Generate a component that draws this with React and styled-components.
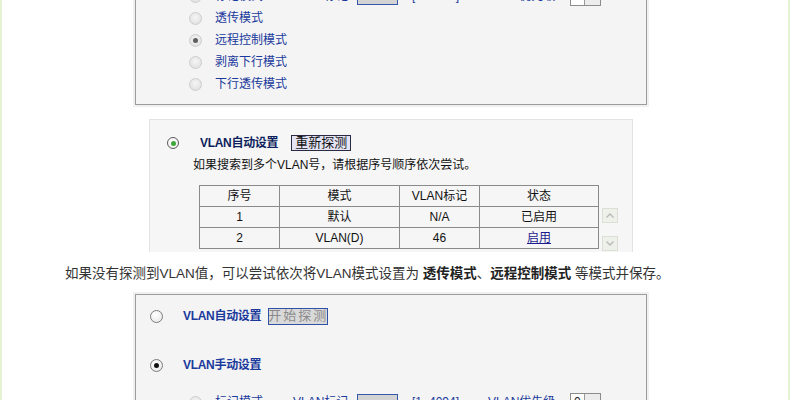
import React from "react";
import styled, { createGlobalStyle, css } from "styled-components";

const GlobalStyle = createGlobalStyle`
  html, body { margin: 0; padding: 0; background: #fff; }
  body {
    font-family: "Liberation Sans", "Noto Sans CJK SC", sans-serif;
    overflow: hidden;
  }
`;

const Page = styled.div`
  box-sizing: border-box;
  width: 790px;
  height: 400px;
  overflow: hidden;
  background: #fff;
  border-left: 2px solid #e6f2d4;
  border-right: 2px solid #e6f2d4;
  display: flex;
  flex-direction: column;
  align-items: flex-start;
`;

/* grey settings frame of the router page */
const Panel = styled.section`
  box-sizing: border-box;
  flex: none;
  width: 512px;
  margin: ${(p) => p.$top}px 0 0 133px;
  padding: ${(p) => p.$pad};
  background: #f4f4f4;
  border: 1px solid #9c9c9c;
  box-shadow: 0 0 0 2px #f0f0f0;
`;

const Row = styled.div`
  display: flex;
  align-items: center;
  height: ${(p) => p.$h ?? 22}px;
  margin-top: ${(p) => p.$mt ?? 0}px;
  padding-left: ${(p) => p.$indent ?? 0}px;
  gap: ${(p) => p.$gap ?? 13}px;
  font-size: 12px;
  line-height: 22px;
  color: #1a3a9c;
  white-space: nowrap;
`;

const radioLooks = {
  muted: css`
    border: 1px solid #cdcdcd;
    background: radial-gradient(circle at 50% 40%, #f5f5f5, #dcdcdc);
  `,
  plain: css`
    border: 1px solid #7c7c7c;
    background: radial-gradient(circle at 40% 35%, #ffffff, #e4e4e4);
  `,
  xp: css`
    border: 1px solid #5a5a5a;
    background: radial-gradient(circle at 40% 35%, #ffffff, #ececec);
  `,
};

const dotColors = { muted: "#5e5e5e", plain: "#111", xp: "#3fa63a" };

const Radio = styled.span`
  flex: none;
  box-sizing: border-box;
  position: relative;
  width: ${(p) => p.$size ?? 13}px;
  height: ${(p) => p.$size ?? 13}px;
  border-radius: 50%;
  ${(p) => radioLooks[p.$look || "muted"]}
  &::after {
    content: "";
    display: ${(p) => (p.$on ? "block" : "none")};
    position: absolute;
    left: 50%;
    top: 50%;
    width: 5px;
    height: 5px;
    margin: -2.5px 0 0 -2.5px;
    border-radius: 50%;
    background: ${(p) => dotColors[p.$look || "muted"]};
  }
`;

const Field = styled.span`
  flex: none;
  width: ${(p) => p.$w}px;
`;

const TagInput = styled.span`
  flex: none;
  box-sizing: border-box;
  width: 41px;
  height: 17px;
  background: #d3d3d3;
  border: 1px solid #3658a8;
`;

const Select = styled.span`
  flex: none;
  box-sizing: border-box;
  display: flex;
  width: 31px;
  height: 19px;
  border: 1px solid #8c8c8c;
  background: #fff;
  font-size: 12px;
  line-height: 17px;
  color: #222;
`;

const SelectValue = styled.span`
  flex: 1;
  padding-left: 3px;
`;

const SelectArrow = styled.span`
  flex: none;
  box-sizing: border-box;
  width: 16px;
  border-left: 1px solid #9a9a9a;
  background: #ececec;
  display: flex;
  align-items: center;
  justify-content: center;
`;

const Title = styled.span`
  font-weight: bold;
  font-size: 12px;
  letter-spacing: -0.3px;
  color: ${(p) => p.$color || "#1a3a9c"};
`;

const ProbeButton = styled.span`
  flex: none;
  box-sizing: border-box;
  width: 60px;
  height: ${(p) => (p.$off ? 17 : 16)}px;
  margin-left: ${(p) => p.$ml}px;
  display: flex;
  align-items: center;
  justify-content: center;
  font-size: 13px;
  letter-spacing: ${(p) => (p.$off ? 2 : 0)}px;
  ${(p) =>
    p.$off
      ? css`
          background: #d9d9d9;
          border: 1px solid #2f52a8;
          color: #8a8a8a;
        `
      : css`
          background: #e3e3f4;
          border: 1px solid #2a2a44;
          color: #111;
        `}
`;

/* captured image of the old firmware page */
const Snapshot = styled.div`
  box-sizing: border-box;
  flex: none;
  width: 484px;
  height: 133px;
  margin: 14px 0 0 147px;
  padding: 14px 0 0 17px;
  overflow: hidden;
  background: #f6f6f6;
  border: 1px solid #e3e3e3;
  border-bottom: none;
  font-size: 12px;
  color: #111;
`;

const Hint = styled.div`
  margin: 5px 0 0 26px;
  height: 16px;
  line-height: 16px;
  font-size: 12px;
  color: #111;
  white-space: nowrap;
`;

const TableWrap = styled.div`
  display: flex;
  align-items: flex-start;
  margin: 12px 0 0 32px;
`;

const Grid = styled.table`
  border-collapse: collapse;
  table-layout: fixed;
  width: 400px;
  font-size: 12px;
  color: #111;
`;

const Cell = styled.td`
  height: 20px;
  padding: 0;
  border: 1px solid #8a8a8a;
  text-align: center;
  line-height: 20px;
  white-space: nowrap;
`;

const Link = styled.span`
  color: #1a1a8c;
  text-decoration: underline;
`;

const ScrollBar = styled.div`
  display: flex;
  flex-direction: column;
  gap: 13px;
  margin: 23px 0 0 3px;
`;

const ScrollButton = styled.span`
  box-sizing: border-box;
  width: 16px;
  height: 15px;
  background: #eef0ea;
  border: 1px solid #dcdfd6;
  display: flex;
  align-items: center;
  justify-content: center;
`;

const Note = styled.p`
  margin: 12px 0 0 63px;
  font-size: 13.5px;
  line-height: 20px;
  color: #333;
  white-space: nowrap;
`;

const Strong = styled.b`
  color: #222;
`;

const Chevron = ({ up, color = "#b8b8b8" }) => (
  <svg width="8" height="5" viewBox="0 0 8 5">
    <path
      d={up ? "M0.5 4.5 L4 1 L7.5 4.5" : "M0.5 0.5 L4 4 L7.5 0.5"}
      fill="none"
      stroke={color}
      strokeWidth="1.3"
    />
  </svg>
);

const TagRow = ({ mt }) => (
  <Row $indent={53} $gap={0} $mt={mt}>
    <Radio />
    <Field $w={13} />
    <Field $w={78}>标记模式</Field>
    <Field $w={64}>VLAN标记</Field>
    <TagInput />
    <Field $w={14} />
    <Field $w={76}>[1~4094]</Field>
    <Field $w={82}>VLAN优先级</Field>
    <Select>
      <SelectValue>0</SelectValue>
      <SelectArrow>
        <Chevron color="#555" />
      </SelectArrow>
    </Select>
  </Row>
);

const modes = [
  { label: "透传模式", on: false },
  { label: "远程控制模式", on: true },
  { label: "剥离下行模式", on: false },
  { label: "下行透传模式", on: false },
];

export default function App() {
  return (
    <>
      <GlobalStyle />
      <Page>
        <Panel $top={-25} $pad="9px 0 9px 0">
          <TagRow />
          {modes.map((m) => (
            <Row key={m.label} $indent={53}>
              <Radio $on={m.on} />
              <span>{m.label}</span>
            </Row>
          ))}
        </Panel>

        <Snapshot>
          <Row $h={18} $gap={21}>
            <Radio $look="xp" $size={12} $on />
            <Title $color="#0d1f5c">VLAN自动设置</Title>
            <ProbeButton $ml={-8}>重新探测</ProbeButton>
          </Row>
          <Hint>如果搜索到多个VLAN号，请根据序号顺序依次尝试。</Hint>
          <TableWrap>
            <Grid>
              <colgroup>
                <col style={{ width: 80 }} />
                <col style={{ width: 120 }} />
                <col style={{ width: 80 }} />
                <col style={{ width: 119 }} />
              </colgroup>
              <tbody>
                <tr>
                  <Cell>序号</Cell>
                  <Cell>模式</Cell>
                  <Cell>VLAN标记</Cell>
                  <Cell>状态</Cell>
                </tr>
                <tr>
                  <Cell>1</Cell>
                  <Cell>默认</Cell>
                  <Cell>N/A</Cell>
                  <Cell>已启用</Cell>
                </tr>
                <tr>
                  <Cell>2</Cell>
                  <Cell>VLAN(D)</Cell>
                  <Cell>46</Cell>
                  <Cell>
                    <Link>启用</Link>
                  </Cell>
                </tr>
              </tbody>
            </Grid>
            <ScrollBar>
              <ScrollButton>
                <Chevron up />
              </ScrollButton>
              <ScrollButton>
                <Chevron />
              </ScrollButton>
            </ScrollBar>
          </TableWrap>
        </Snapshot>

        <Note>
          如果没有探测到VLAN值，可以尝试依次将VLAN模式设置为{" "}
          <Strong>透传模式</Strong>、<Strong>远程控制模式</Strong> 等模式并保存。
        </Note>

        <Panel $top={10} $pad="10px 0 20px 0">
          <Row $indent={14} $gap={20}>
            <Radio $look="plain" />
            <Title>VLAN自动设置</Title>
            <ProbeButton $off $ml={-13}>
              开始探测
            </ProbeButton>
          </Row>
          <Row $indent={14} $gap={20} $mt={27}>
            <Radio $look="plain" $on />
            <Title>VLAN手动设置</Title>
          </Row>
          <TagRow mt={15} />
        </Panel>
      </Page>
    </>
  );
}
